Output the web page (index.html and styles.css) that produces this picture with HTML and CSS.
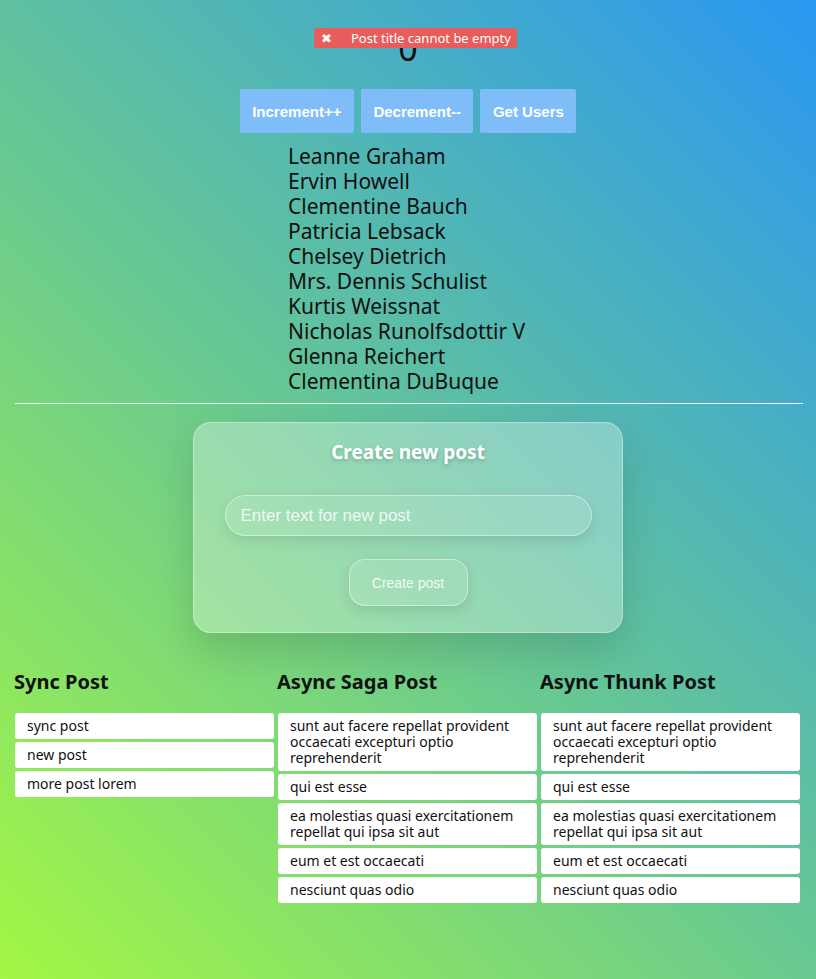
FILE: index.html
```html
<!DOCTYPE html>
<html>
<head>
<meta charset="utf-8">
<link rel="stylesheet" href="styles.css">
</head>
<body>
<div class="app">
  <div class="toast"><span class="toast-x">✖</span><span class="toast-msg">Post title cannot be empty</span></div>
  <div class="counter">0</div>
  <div class="buttons">
    <button class="btn">Increment++</button>
    <button class="btn">Decrement--</button>
    <button class="btn">Get Users</button>
  </div>
  <div class="users-wrap">
    <div class="users">
      <div>Leanne Graham</div>
      <div>Ervin Howell</div>
      <div>Clementine Bauch</div>
      <div>Patricia Lebsack</div>
      <div>Chelsey Dietrich</div>
      <div>Mrs. Dennis Schulist</div>
      <div>Kurtis Weissnat</div>
      <div>Nicholas Runolfsdottir V</div>
      <div>Glenna Reichert</div>
      <div>Clementina DuBuque</div>
    </div>
  </div>
  <hr class="divider">
  <div class="card-wrap">
    <form class="card">
      <div class="card-title">Create new post</div>
      <input class="card-input" type="text" placeholder="Enter text for new post">
      <button class="card-btn" type="button">Create post</button>
    </form>
  </div>
  <div class="columns">
    <div class="col">
      <h2 class="col-title">Sync Post</h2>
      <div class="post">sync post</div>
      <div class="post">new post</div>
      <div class="post">more post lorem</div>
    </div>
    <div class="col">
      <h2 class="col-title">Async Saga Post</h2>
      <div class="post">sunt aut facere repellat provident occaecati excepturi optio reprehenderit</div>
      <div class="post">qui est esse</div>
      <div class="post">ea molestias quasi exercitationem repellat qui ipsa sit aut</div>
      <div class="post">eum et est occaecati</div>
      <div class="post">nesciunt quas odio</div>
    </div>
    <div class="col">
      <h2 class="col-title">Async Thunk Post</h2>
      <div class="post">sunt aut facere repellat provident occaecati excepturi optio reprehenderit</div>
      <div class="post">qui est esse</div>
      <div class="post">ea molestias quasi exercitationem repellat qui ipsa sit aut</div>
      <div class="post">eum et est occaecati</div>
      <div class="post">nesciunt quas odio</div>
    </div>
  </div>
</div>
</body>
</html>
```
FILE: styles.css
```css
html, body {
  margin: 0;
  padding: 0;
}
body {
  min-height: 979px;
  background: linear-gradient(45deg, #a3f744 0%, #64c598 50%, #2a97f2 100%);
  font-family: "Noto Sans", "Open Sans", sans-serif;
  color: #111;
}
.app {
  position: relative;
  padding-top: 30px;
}
.toast {
  position: absolute;
  left: 314px;
  top: 28px;
  width: 203px;
  height: 20px;
  background: #e95c5c;
  border-radius: 3px;
  color: #fff;
  font-size: 13px;
  line-height: 20px;
  display: flex;
  align-items: center;
  box-sizing: border-box;
  padding-left: 7px;
}
.toast-x {
  font-size: 13px;
  width: 30px;
}
.counter {
  text-align: center;
  font-size: 34px;
  line-height: 36px;
  height: 36px;
  font-family: "Noto Sans", sans-serif;
}
.buttons {
  display: flex;
  justify-content: center;
  gap: 7px;
  margin-top: 23px;
}
.btn {
  height: 44px;
  border: none;
  border-radius: 2px;
  background: #7fbdf9;
  color: #fff;
  font-family: "Liberation Sans", Arial, sans-serif;
  font-weight: bold;
  font-size: 15px;
  padding: 0 12.5px;
}
.users-wrap {
  display: flex;
  justify-content: center;
  margin-top: 11px;
}
.users {
  font-size: 21px;
  line-height: 25px;
  color: #101010;
  width: 240px;
}
.divider {
  margin: 9px 13px 0 15px;
  border: none;
  height: 1px;
  background: #fff;
}
.card-wrap {
  display: flex;
  justify-content: center;
  margin-top: 18px;
}
.card {
  width: 430px;
  height: 211px;
  box-sizing: border-box;
  border-radius: 18px;
  background: rgba(255, 255, 255, 0.3);
  border: 1px solid rgba(255, 255, 255, 0.35);
  box-shadow: 0 18px 40px rgba(0, 0, 0, 0.14);
  display: flex;
  flex-direction: column;
  align-items: center;
  margin: 0;
}
.card-title {
  margin-top: 17px;
  color: #fff;
  font-weight: bold;
  font-size: 19px;
  line-height: 24px;
  text-shadow: 0 2px 4px rgba(0, 0, 0, 0.2);
}
.card-input {
  margin-top: 31px;
  width: 367px;
  height: 41px;
  box-sizing: border-box;
  border-radius: 21px;
  border: 1px solid rgba(255, 255, 255, 0.45);
  background: rgba(255, 255, 255, 0.1);
  box-shadow: 0 5px 14px rgba(0, 0, 0, 0.1);
  padding: 0 15px;
  font-family: "Liberation Sans", Arial, sans-serif;
  font-size: 17px;
  color: #fff;
  outline: none;
}
.card-input::placeholder {
  color: rgba(255, 255, 255, 0.85);
}
.card-btn {
  margin-top: 23px;
  width: 119px;
  height: 47px;
  border-radius: 16px;
  border: 1px solid rgba(255, 255, 255, 0.45);
  background: rgba(255, 255, 255, 0.1);
  box-shadow: 0 5px 14px rgba(0, 0, 0, 0.1);
  font-family: "Liberation Sans", Arial, sans-serif;
  font-size: 14px;
  color: rgba(255, 255, 255, 0.9);
}
.columns {
  display: grid;
  grid-template-columns: 263px 263px 263px;
  padding: 0 14px;
  margin-top: 36px;
}
.col-title {
  margin: 0 0 18px 0;
  font-size: 20px;
  line-height: 26px;
  font-weight: bold;
  color: #111;
}
.post {
  margin: 0 0 3px 1px;
  width: 259px;
  box-sizing: border-box;
  background: #fff;
  border-radius: 3px;
  padding: 5px 12px;
  font-size: 14px;
  line-height: 16px;
  color: #111;
}
```
